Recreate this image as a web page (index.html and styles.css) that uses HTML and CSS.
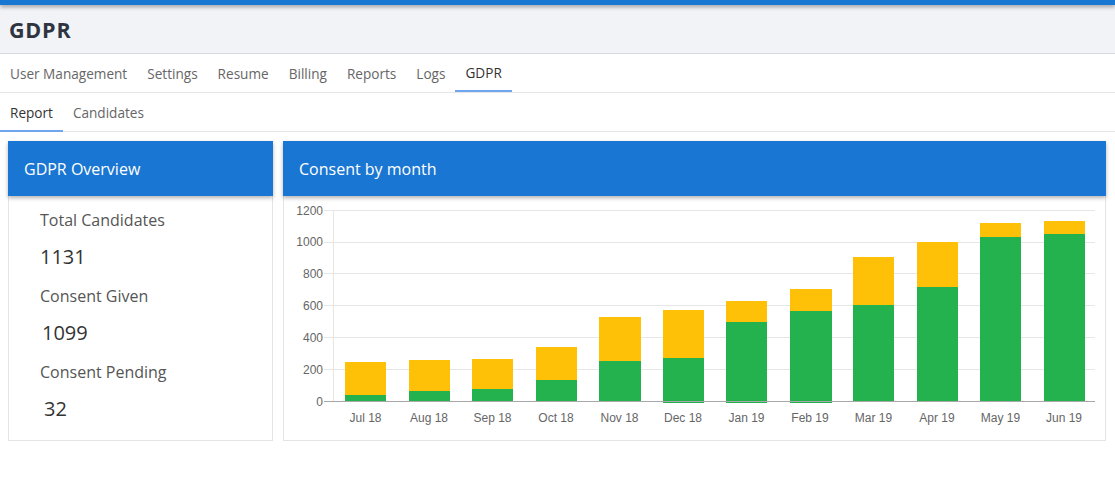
FILE: index.html
```html
<!DOCTYPE html>
<html lang="en">
<head>
<meta charset="utf-8">
<title>GDPR</title>
<link rel="stylesheet" href="styles.css">
</head>
<body>
<div class="topbar"></div>
<header class="page-header">
  <h1 class="page-title">GDPR</h1>
</header>
<nav class="tabs main-tabs">
  <a class="tab">User Management</a>
  <a class="tab">Settings</a>
  <a class="tab">Resume</a>
  <a class="tab">Billing</a>
  <a class="tab">Reports</a>
  <a class="tab">Logs</a>
  <a class="tab active">GDPR</a>
</nav>
<nav class="tabs sub-tabs">
  <a class="tab active">Report</a>
  <a class="tab">Candidates</a>
</nav>
<main class="content">
  <section class="card overview">
    <div class="card-header">GDPR Overview</div>
    <div class="card-body stats">
      <div class="stat-label">Total Candidates</div>
      <div class="stat-value">1131</div>
      <div class="stat-label">Consent Given</div>
      <div class="stat-value indent-1">1099</div>
      <div class="stat-label">Consent Pending</div>
      <div class="stat-value indent-2">32</div>
    </div>
  </section>
  <section class="card consent">
    <div class="card-header">Consent by month</div>
    <div class="card-body chart-body">
      <svg class="chart" width="821" height="243" viewBox="0 0 821 243">
        <g class="grid" shape-rendering="crispEdges">
          <line x1="40" y1="14.5" x2="811" y2="14.5"/>
          <line x1="40" y1="46.5" x2="811" y2="46.5"/>
          <line x1="40" y1="77.5" x2="811" y2="77.5"/>
          <line x1="40" y1="109.5" x2="811" y2="109.5"/>
          <line x1="40" y1="141.5" x2="811" y2="141.5"/>
          <line x1="40" y1="173.5" x2="811" y2="173.5"/>
          <line x1="49.5" y1="14" x2="49.5" y2="205"/>
        </g>
        <g class="bars" shape-rendering="crispEdges">
          <rect class="pending" x="61" y="165.7" width="41" height="39.8"/>
          <rect class="given" x="61" y="199" width="41" height="6.5"/>
          <rect class="pending" x="124.5" y="163.7" width="41" height="41.8"/>
          <rect class="given" x="124.5" y="195" width="41" height="10.5"/>
          <rect class="pending" x="188" y="163.3" width="41" height="42.2"/>
          <rect class="given" x="188" y="193" width="41" height="12.5"/>
          <rect class="pending" x="251.5" y="151.3" width="41" height="54.2"/>
          <rect class="given" x="251.5" y="184" width="41" height="21.5"/>
          <rect class="pending" x="315" y="120.7" width="42" height="84.8"/>
          <rect class="given" x="315" y="164.7" width="42" height="40.8"/>
          <rect class="pending" x="378.5" y="114" width="41" height="91.5"/>
          <rect class="given" x="378.5" y="162" width="41" height="45"/>
          <rect class="pending" x="442" y="105" width="41" height="100.5"/>
          <rect class="given" x="442" y="126" width="41" height="80.5"/>
          <rect class="pending" x="505.5" y="93" width="42" height="112.5"/>
          <rect class="given" x="505.5" y="115" width="42" height="91.5"/>
          <rect class="pending" x="569" y="61.3" width="41" height="144.2"/>
          <rect class="given" x="569" y="109" width="41" height="96.5"/>
          <rect class="pending" x="632.5" y="45.7" width="41" height="159.8"/>
          <rect class="given" x="632.5" y="91" width="41" height="114.5"/>
          <rect class="pending" x="696" y="26.7" width="41" height="178.8"/>
          <rect class="given" x="696" y="41" width="41" height="164.5"/>
          <rect class="pending" x="759.5" y="25" width="41" height="180.5"/>
          <rect class="given" x="759.5" y="37.7" width="41" height="167.8"/>
        </g>
        <line class="axis" x1="40" y1="205.5" x2="811" y2="205.5" shape-rendering="crispEdges"/>
        <g class="ylabels">
          <text x="39" y="18.5">1200</text>
          <text x="39" y="50">1000</text>
          <text x="39" y="81.5">800</text>
          <text x="39" y="113.5">600</text>
          <text x="39" y="145.5">400</text>
          <text x="39" y="177.5">200</text>
          <text x="39" y="209.5">0</text>
        </g>
        <g class="xlabels">
          <text x="81.5" y="225.7">Jul 18</text>
          <text x="145" y="225.7">Aug 18</text>
          <text x="208.5" y="225.7">Sep 18</text>
          <text x="272" y="225.7">Oct 18</text>
          <text x="335.5" y="225.7">Nov 18</text>
          <text x="399" y="225.7">Dec 18</text>
          <text x="462.5" y="225.7">Jan 19</text>
          <text x="526" y="225.7">Feb 19</text>
          <text x="589.5" y="225.7">Mar 19</text>
          <text x="653" y="225.7">Apr 19</text>
          <text x="716.5" y="225.7">May 19</text>
          <text x="780" y="225.7">Jun 19</text>
        </g>
      </svg>
    </div>
  </section>
</main>
</body>
</html>
```
FILE: styles.css
```css
* { box-sizing: border-box; }
html, body { margin: 0; padding: 0; background: #fff; }
body {
  font-family: "Open Sans", "Noto Sans", sans-serif;
  color: #333;
}
.topbar {
  height: 5px;
  background: #1976d2;
  box-shadow: 0 2px 4px rgba(0, 0, 0, 0.35);
  position: relative;
  z-index: 1;
}
.page-header {
  height: 49px;
  background: #f2f3f7;
  border-bottom: 1px solid #d6d9de;
  display: flex;
  align-items: center;
  padding-left: 9px;
}
.page-title {
  margin: 0;
  font-size: 21.5px;
  font-weight: 700;
  color: #2e3440;
  letter-spacing: 0.8px;
}
.tabs {
  display: flex;
  border-bottom: 1px solid #e6e6e6;
  height: 39px;
}
.tab {
  display: flex;
  align-items: center;
  padding: 0 10px;
  font-size: 13.6px;
  color: #666;
  border-bottom: 2px solid transparent;
  margin-bottom: -1px;
  padding-top: 1px;
}
.tab.active {
  color: #333;
  border-bottom-color: #6fa6ef;
}
.main-tabs .tab.active { margin-bottom: 0; }
.sub-tabs .tab { padding-top: 2px; }
.content {
  display: grid;
  grid-template-columns: 265px 1fr;
  gap: 10px;
  padding: 9px 9px 0 8px;
}
.card {
  border: 1px solid #e4e4e4;
  height: 300px;
  display: flex;
  flex-direction: column;
}
.card-header {
  height: 55px;
  margin: -1px -1px 0;
  background: #1976d2;
  color: #fff;
  font-size: 16px;
  display: flex;
  align-items: center;
  padding-left: 16px;
  box-shadow: 0 2px 4px rgba(0, 0, 0, 0.3);
  position: relative;
}
.stats {
  padding: 13px 0 0 31px;
}
.stat-label {
  font-size: 16px;
  color: #555;
  line-height: 22px;
  margin-bottom: 14.5px;
}
.stat-value {
  font-size: 20px;
  color: #333;
  line-height: 22px;
  margin-bottom: 17.5px;
}
.indent-1 { padding-left: 2px; }
.indent-2 { padding-left: 4px; }
.chart-body { flex: 1; }
.chart { display: block; }
.grid line { stroke: #e6e6e6; stroke-width: 1; }
.axis { stroke: #a8a8a8; stroke-width: 1; }
.pending { fill: #ffc107; }
.given { fill: #23b24d; }
.ylabels text, .xlabels text {
  font-family: "Liberation Sans", Arial, sans-serif;
  font-size: 12px;
  fill: #666;
}
.ylabels text { text-anchor: end; }
.xlabels text { text-anchor: middle; }
```
